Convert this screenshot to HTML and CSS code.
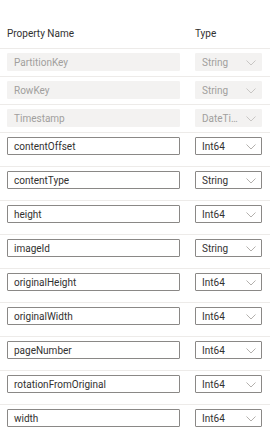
FILE: index.html
```html
<!DOCTYPE html>
<html lang="en">
<head>
  <meta charset="UTF-8">
  <title>Edit Entity</title>
  <meta name="viewport" content="width=device-width, initial-scale=1.0">
  <link rel="stylesheet" href="styles.css">
</head>
<body>
<div class="props">
  <div class="props-head">
    <span>Property Name</span>
    <span>Type</span>
  </div>

  <div class="prop-row locked">
    <div class="field">PartitionKey</div>
    <div class="select"><span>String</span><svg viewBox="0 0 10 6"><path d="M0.5 0.5 L5 5 L9.5 0.5"/></svg></div>
  </div>
  <div class="prop-row locked">
    <div class="field">RowKey</div>
    <div class="select"><span>String</span><svg viewBox="0 0 10 6"><path d="M0.5 0.5 L5 5 L9.5 0.5"/></svg></div>
  </div>
  <div class="prop-row locked">
    <div class="field">Timestamp</div>
    <div class="select"><span>DateTime</span><svg viewBox="0 0 10 6"><path d="M0.5 0.5 L5 5 L9.5 0.5"/></svg></div>
  </div>

  <div class="prop-row">
    <div class="field">contentOffset</div>
    <div class="select"><span>Int64</span><svg viewBox="0 0 10 6"><path d="M0.5 0.5 L5 5 L9.5 0.5"/></svg></div>
  </div>
  <div class="prop-row">
    <div class="field">contentType</div>
    <div class="select"><span>String</span><svg viewBox="0 0 10 6"><path d="M0.5 0.5 L5 5 L9.5 0.5"/></svg></div>
  </div>
  <div class="prop-row">
    <div class="field">height</div>
    <div class="select"><span>Int64</span><svg viewBox="0 0 10 6"><path d="M0.5 0.5 L5 5 L9.5 0.5"/></svg></div>
  </div>
  <div class="prop-row">
    <div class="field">imageId</div>
    <div class="select"><span>String</span><svg viewBox="0 0 10 6"><path d="M0.5 0.5 L5 5 L9.5 0.5"/></svg></div>
  </div>
  <div class="prop-row">
    <div class="field">originalHeight</div>
    <div class="select"><span>Int64</span><svg viewBox="0 0 10 6"><path d="M0.5 0.5 L5 5 L9.5 0.5"/></svg></div>
  </div>
  <div class="prop-row">
    <div class="field">originalWidth</div>
    <div class="select"><span>Int64</span><svg viewBox="0 0 10 6"><path d="M0.5 0.5 L5 5 L9.5 0.5"/></svg></div>
  </div>
  <div class="prop-row">
    <div class="field">pageNumber</div>
    <div class="select"><span>Int64</span><svg viewBox="0 0 10 6"><path d="M0.5 0.5 L5 5 L9.5 0.5"/></svg></div>
  </div>
  <div class="prop-row">
    <div class="field">rotationFromOriginal</div>
    <div class="select"><span>Int64</span><svg viewBox="0 0 10 6"><path d="M0.5 0.5 L5 5 L9.5 0.5"/></svg></div>
  </div>
  <div class="prop-row">
    <div class="field">width</div>
    <div class="select"><span>Int64</span><svg viewBox="0 0 10 6"><path d="M0.5 0.5 L5 5 L9.5 0.5"/></svg></div>
  </div>
</div>
</body>
</html>
```

FILE: styles.css
```css
html, body {
  background: #fff;
  color: #323130;
  font-family: 'Roboto', 'Noto Sans', sans-serif;
  font-size: 10px;
  margin: 0;
  padding: 0;
  overflow: hidden;
}
.props {
  width: 270px;
}
.props-head {
  display: grid;
  grid-template-columns: 173px 67px;
  column-gap: 15px;
  padding: 26px 0 7px 7px;
  line-height: 15px;
}
.prop-row {
  display: grid;
  grid-template-columns: 173px 67px;
  column-gap: 15px;
  border-top: 1px solid #edebe9;
  padding: 4px 0 11px 7px;
}
.prop-row.locked {
  padding-bottom: 5px;
}
.field, .select {
  box-sizing: border-box;
  height: 18px;
  border: 1px solid #8a8886;
  border-radius: 1px;
  line-height: 15px;
  padding: 1px 6px 0 6px;
  white-space: nowrap;
  overflow: hidden;
}
.select {
  display: flex;
  align-items: center;
  justify-content: space-between;
  padding-right: 5px;
}
.select span {
  overflow: hidden;
  text-overflow: ellipsis;
  flex: 1;
  min-width: 0;
  margin-right: 6px;
}
.select svg {
  width: 10px;
  height: 6px;
  flex: none;
  fill: none;
  stroke: #b3b0ad;
  stroke-width: 1;
}
.locked .field, .locked .select {
  background: #f3f2f1;
  border-color: #f3f2f1;
  color: #a19f9d;
}
.locked .select svg {
  stroke: #c8c6c4;
}
```
